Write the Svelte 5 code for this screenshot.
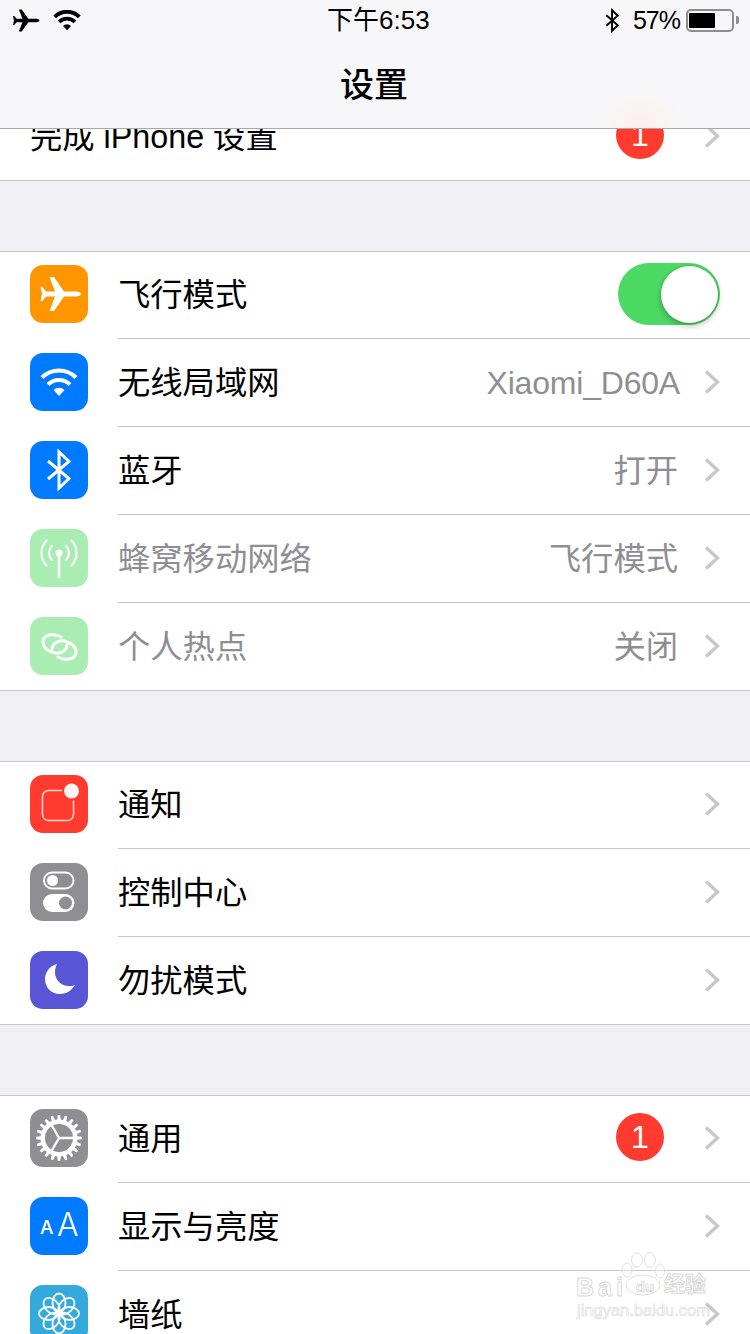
<script>
  const groups = [
    [
      { label: '飞行模式', icon: 'plane', bg: '#ff9500', toggle: true },
      { label: '无线局域网', icon: 'wifi', bg: '#007aff', value: 'Xiaomi_D60A', latin: true },
      { label: '蓝牙', icon: 'bluetooth', bg: '#007aff', value: '打开' },
      { label: '蜂窝移动网络', icon: 'cell', bg: '#a9edb3', value: '飞行模式', off: true },
      { label: '个人热点', icon: 'hotspot', bg: '#a9edb3', value: '关闭', off: true },
    ],
    [
      { label: '通知', icon: 'notify', bg: '#ff3b30' },
      { label: '控制中心', icon: 'control', bg: '#8e8e93' },
      { label: '勿扰模式', icon: 'moon', bg: '#5856d6' },
    ],
    [
      { label: '通用', icon: 'gear', bg: '#8e8e93', badge: 1 },
      { label: '显示与亮度', icon: 'type', bg: '#007aff' },
      { label: '墙纸', icon: 'flower', bg: '#34aadc' },
    ],
  ];

  // teeth round the settings cog
  function gearPath() {
    const pts = [];
    const teeth = 20;
    const step = (Math.PI * 2) / teeth;
    for (let i = 0; i < teeth; i++) {
      const a = i * step;
      for (const [off, r] of [[-0.3, 18.5], [-0.17, 23], [0.17, 23], [0.3, 18.5]]) {
        const t = a + off * step;
        pts.push(`${(29 + Math.cos(t) * r).toFixed(2)} ${(29 + Math.sin(t) * r).toFixed(2)}`);
      }
    }
    return 'M' + pts.join('L') + 'Z';
  }

  const petals = [0, 45, 90, 135, 180, 225, 270, 315];
</script>

{#snippet wifiArcs(color, weight)}
  <path d="M12 24.5a24 24 0 0 1 34 0" fill="none" stroke={color} stroke-width={weight} />
  <path d="M18 31.5a15.5 15.5 0 0 1 22 0" fill="none" stroke={color} stroke-width={weight} />
  <path d="M23.5 37a8 8 0 0 1 11 0L29 43Z" fill={color} />
{/snippet}

{#snippet planeShape(color)}
  <path d="M46 26.5c3 0 5 1.2 5 2.5s-2 2.500-5 2.500H34L24 46h-4.500L25 31.500H16L12.500 36h-2L12 29l-1.500-7h2L16 26.500h9L19.500 12H24l10 14.500Z" fill={color} />
{/snippet}

{#snippet icon(name)}
  <svg class="glyph" viewBox="0 0 58 58">
    {#if name === 'plane'}
      {@render planeShape('#fff')}
    {:else if name === 'wifi'}
      {@render wifiArcs('#fff', 4)}
    {:else if name === 'bluetooth'}
      <path d="M18 20l21 17.500L29 47V11l10 9.500L18 38" fill="none" stroke="#fff" stroke-width="3" />
    {:else if name === 'cell'}
      <circle cx="29" cy="24" r="3.500" fill="#fff" />
      <path d="M29 25v23" stroke="#fff" stroke-width="2.500" stroke-linecap="round" />
      <g fill="none" stroke="#fff" stroke-width="2" stroke-linecap="round">
        <path d="M22 17a10 10 0 0 0 0 14M36 17a10 10 0 0 1 0 14" />
        <path d="M16.500 11.500a18 18 0 0 0 0 25M41.500 11.500a18 18 0 0 1 0 25" />
      </g>
    {:else if name === 'hotspot'}
      <g fill="none" stroke="#fff" stroke-width="3" stroke-linecap="round">
        <path d="M22 32c0-5 6-9 12-8 6 1 12 5 12 11s-6 8-12 7c-2 0-4-1-6-2" />
        <path d="M22 32c0-5 6-9 12-8 6 1 12 5 12 11s-6 8-12 7c-2 0-4-1-6-2" transform="rotate(180 29.500 30)" />
      </g>
    {:else if name === 'notify'}
      <rect x="12.500" y="15.500" width="31" height="30" rx="6" fill="none" stroke="#fff" stroke-opacity="0.8" stroke-width="1.500" />
      <circle cx="41.500" cy="16" r="9.500" fill="#ff3b30" />
      <circle cx="41.500" cy="16" r="7.500" fill="#fff" fill-opacity="0.95" />
    {:else if name === 'control'}
      <rect x="14" y="9.500" width="29.500" height="16" rx="8" fill="none" stroke="#fff" stroke-width="2" />
      <circle cx="22.500" cy="17.500" r="5.500" fill="#fff" />
      <rect x="13" y="31" width="31.500" height="18" rx="9" fill="#fff" />
      <circle cx="35.500" cy="40" r="6.500" fill="#8e8e93" />
    {:else if name === 'moon'}
      <path d="M27 13C19 15 15 22 15 28c0 9 7 15 15 15 7 0 12-4 15-9-2 1-4 1-6 1-8 0-14-6-14-14 0-3 1-6 2-8Z" fill="#fff" />
    {:else if name === 'gear'}
      <path d={gearPath()} fill="#fff" />
      <circle cx="29" cy="29" r="14" fill="#8e8e93" />
      <path d="M29 29H44M29 29L21.500 16M29 29L21.500 42" stroke="#fff" stroke-width="2.400" />
    {:else if name === 'type'}
      <text x="10" y="36.500" class="aa small">A</text>
      <text x="27" y="39" class="aa big">A</text>
    {:else if name === 'flower'}
      <g fill="none" stroke="#fff" stroke-width="1.800">
        {#each petals as deg}
          <ellipse cx="29" cy="18" rx="6.500" ry="9.500" transform={`rotate(${deg} 29 28.500)`} />
        {/each}
      </g>
      <circle cx="29" cy="28.500" r="3.500" fill="#fff" />
    {/if}
  </svg>
{/snippet}

{#snippet chevron()}
  <svg class="chevron" viewBox="0 0 16 24">
    <path d="M2 1.500L13.500 12 2 22.500" fill="none" stroke="#c7c7cc" stroke-width="3.500" />
  </svg>
{/snippet}

<div class="screen">
  <header class="navbar">
    <div class="status">
      <div class="status-left">
        <svg class="st-plane" viewBox="9 10 43 38">{@render planeShape('#000')}</svg>
        <svg class="st-wifi" viewBox="10 15 38 29">{@render wifiArcs('#000', 5.5)}</svg>
      </div>
      <span class="clock">下午6:53</span>
      <div class="status-right">
        <svg class="st-bt" viewBox="0 0 18 26">
          <path d="M2.500 7.500L14.500 18 8.500 24V2l6 6L2.500 18.500" fill="none" stroke="#000" stroke-width="2" />
        </svg>
        <span class="pct">57%</span>
        <div class="battery"><div class="level" style="width: 26px"></div></div>
        <div class="nub"></div>
      </div>
    </div>
    <h1>设置</h1>
  </header>

  <section class="group clipped">
    <div class="row">
      <div class="body">
        <span class="label">完成 iPhone 设置</span>
        <span class="badge">1</span>
        {@render chevron()}
      </div>
    </div>
  </section>

  {#each groups as rows}
    <section class="group">
      {#each rows as row, i}
        <div class="row" class:first={i === 0} class:end={i === rows.length - 1}>
          <div class="tile" style="background: {row.bg}">{@render icon(row.icon)}</div>
          <div class="body">
            <span class="label" class:off={row.off}>{row.label}</span>
            {#if row.toggle}
              <div class="switch"><div class="knob"></div></div>
            {:else}
              {#if row.value}<span class="value" class:latin={row.latin}>{row.value}</span>{/if}
              {#if row.badge}<span class="badge">{row.badge}</span>{/if}
              {@render chevron()}
            {/if}
          </div>
        </div>
      {/each}
    </section>
  {/each}

  <div class="watermark">
    <svg class="paw" viewBox="0 0 44 44">
      <g fill="rgba(255,255,255,0.3)" stroke="#e0e0e0" stroke-width="1">
        <ellipse cx="6" cy="18" rx="5" ry="7" />
        <ellipse cx="16" cy="8" rx="5.500" ry="7" />
        <ellipse cx="29" cy="8" rx="5.500" ry="7.500" />
        <ellipse cx="39" cy="19" rx="4.500" ry="7" />
        <ellipse cx="22" cy="33" rx="17" ry="10" fill="rgba(255,255,255,0.6)" />
      </g>
    </svg>
    <div class="wm-main"><span class="wm-bai">Bai</span><span class="wm-du">du</span><span class="wm-cn">经验</span></div>
    <div class="wm-url">jingyan.baidu.com</div>
  </div>
</div>

<style>
  :global(body) {
    margin: 0;
    background: #efeff4;
  }
  .screen {
    position: relative;
    width: 750px;
    height: 1334px;
    overflow: hidden;
    background: #efeff4;
    padding-top: 93px;
    box-sizing: border-box;
    font-family: "Liberation Sans", "Noto Sans CJK SC", sans-serif;
    color: #000;
  }

  .navbar {
    position: absolute;
    top: 0;
    left: 0;
    right: 0;
    z-index: 2;
    height: 129px;
    box-sizing: border-box;
    border-bottom: 1px solid #a9a9ab;
    background:
      radial-gradient(ellipse 45px 34px at 640px 122px, #fbf1ed, rgba(247, 247, 249, 0)),
      #f7f7f9;
  }
  .status {
    position: relative;
    display: flex;
    justify-content: space-between;
    align-items: center;
    height: 40px;
    padding: 0 11px 0 12px;
  }
  .status-left {
    display: flex;
    align-items: center;
    gap: 13px;
  }
  .st-plane {
    width: 28px;
    height: 25px;
  }
  .st-wifi {
    width: 28px;
    height: 21px;
  }
  .clock {
    position: absolute;
    left: 327px;
    top: 3px;
    font-size: 26px;
    line-height: 34px;
    white-space: nowrap;
  }
  .status-right {
    display: flex;
    align-items: center;
  }
  .st-bt {
    width: 17px;
    height: 25px;
    margin-right: 12px;
  }
  .pct {
    font-size: 25px;
    letter-spacing: -1px;
    line-height: 34px;
    margin-right: 6px;
  }
  .battery {
    width: 48px;
    height: 23px;
    box-sizing: border-box;
    border: 2px solid #8e8e8e;
    border-radius: 5px;
    padding: 2px 1px;
  }
  .level {
    height: 100%;
    background: #000;
    border-radius: 1px;
  }
  .nub {
    width: 3px;
    height: 8px;
    margin-left: 2px;
    background: #8e8e8e;
    border-radius: 0 2px 2px 0;
  }
  h1 {
    margin: 0;
    padding-top: 23px;
    padding-right: 2px;
    text-align: center;
    font-size: 34px;
    line-height: 44px;
    font-weight: 500;
  }

  .group {
    background: #fff;
    border-top: 1px solid #c8c7cc;
    border-bottom: 1px solid #c8c7cc;
    margin-bottom: 70px;
  }
  .group.clipped {
    border-top: none;
    height: 88px;
    box-sizing: border-box;
  }
  .row {
    display: flex;
    height: 88px;
    padding-left: 30px;
  }
  .row.first,
  .row.end {
    height: 87px;
  }
  .tile {
    flex: none;
    width: 58px;
    height: 58px;
    margin: 14px 30px 0 0;
    border-radius: 13px;
  }
  .row.first .tile {
    margin-top: 13px;
  }
  .glyph {
    display: block;
    width: 58px;
    height: 58px;
  }
  .aa {
    fill: #fff;
    font-family: "Inter", sans-serif;
    font-weight: 300;
  }
  .aa.small {
    font-size: 19px;
    font-weight: 500;
  }
  .aa.big {
    font-size: 32px;
  }
  .body {
    position: relative;
    flex: 1;
    display: flex;
    align-items: center;
    min-width: 0;
    padding: 0 30px 2px 0;
    box-sizing: border-box;
    border-bottom: 1px solid #c8c7cc;
  }
  .row.end .body,
  .clipped .body {
    border-bottom: none;
  }
  .label {
    flex: 1;
    font-size: 32.3px;
    line-height: 40px;
    margin-top: 2px;
    white-space: nowrap;
  }
  .label.off {
    color: #8e8e93;
  }
  .value {
    font-size: 32.3px;
    line-height: 40px;
    margin: 2px 26px 0 0;
    color: #8e8e93;
    white-space: nowrap;
  }
  .value.latin {
    font-size: 32px;
    letter-spacing: -0.2px;
    margin-right: 24px;
  }
  .badge {
    width: 48px;
    height: 48px;
    line-height: 48px;
    margin: 0 40px 2px 0;
    border-radius: 50%;
    background: #ff3b30;
    color: #fff;
    font-size: 32px;
    text-align: center;
  }
  .chevron {
    flex: none;
    width: 16px;
    height: 24px;
  }
  .switch {
    position: relative;
    align-self: flex-start;
    width: 102px;
    height: 62px;
    margin-top: 11px;
    border-radius: 31px;
    background: #4cd964;
  }
  .knob {
    position: absolute;
    top: 2.500px;
    right: 2px;
    width: 57px;
    height: 57px;
    border-radius: 50%;
    background: #fff;
    box-shadow: 0 3px 6px rgba(0, 0, 0, 0.25), 0 0 2px rgba(0, 0, 0, 0.25);
  }

  .watermark {
    position: absolute;
    left: 575px;
    top: 1252px;
    width: 136px;
    height: 66px;
    z-index: 1;
    color: #fff;
  }
  .paw {
    position: absolute;
    left: 46px;
    top: 0;
    width: 44px;
    height: 44px;
  }
  .wm-main {
    position: absolute;
    left: 1px;
    top: 22px;
    display: flex;
    white-space: nowrap;
    font-weight: 700;
    -webkit-text-stroke: 1px #dadada;
  }
  .wm-bai {
    flex: none;
    width: 50px;
    font-size: 25px;
    line-height: 26px;
    letter-spacing: 4px;
  }
  .wm-du {
    flex: none;
    width: 38px;
    font-size: 15px;
    line-height: 26px;
    text-align: center;
    -webkit-text-stroke: 0.7px #d0d0d0;
  }
  .wm-cn {
    flex: none;
    font-size: 21px;
    line-height: 26px;
    margin-top: -3px;
  }
  .wm-url {
    position: absolute;
    left: 2px;
    top: 48px;
    font-size: 16.500px;
    line-height: 20px;
    white-space: nowrap;
    -webkit-text-stroke: 0.7px #dedede;
  }
</style>
